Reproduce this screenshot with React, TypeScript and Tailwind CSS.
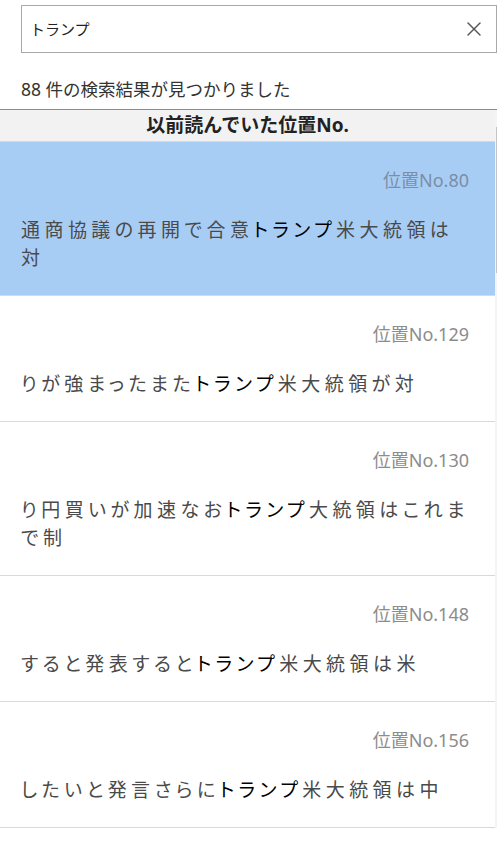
import { X } from "lucide-react"

const results = [
  { pos: 80, before: "通商協議の再開で合意", hit: "トランプ", after: "米大統領は対", active: true },
  { pos: 129, before: "りが強まったまた", hit: "トランプ", after: "米大統領が対" },
  { pos: 130, before: "り円買いが加速なお", hit: "トランプ", after: "大統領はこれまで制" },
  { pos: 148, before: "すると発表すると", hit: "トランプ", after: "米大統領は米" },
  { pos: 156, before: "したいと発言さらに", hit: "トランプ", after: "米大統領は中" },
]

const font = { fontFamily: '"Noto Sans", "Noto Sans CJK JP", sans-serif' }

function ResultRow({ item }: { item: (typeof results)[number] }) {
  return (
    <div
      className={
        "border-b border-[#d9d9d9] pt-[28px] pb-[23px] " +
        (item.active ? "bg-[#a8cdf5]" : "bg-white")
      }
    >
      <div
        className={
          "h-[20px] pr-[26px] text-right text-[18px] leading-[20px] " +
          (item.active ? "text-[#7b8ea6]" : "text-[#8c8c8c]")
        }
      >
        位置No.{item.pos}
      </div>
      <p className="mt-[26px] pl-[21px] pr-[23px] text-[19px] leading-[28px] tracking-[4.45px] text-[#4a4a4a] [font-feature-settings:'palt']">
        {item.before}
        <span className="text-black">{item.hit}</span>
        {item.after}
      </p>
    </div>
  )
}

export default function App() {
  return (
    <div className="h-[851px] w-[497px] overflow-hidden bg-white" style={font}>
      <div className="pt-[5px] pl-[21px]">
        <div className="flex h-[48px] items-center border border-[#a9a9a9] pl-[8px] pr-[10px]">
          <span className="flex-1 text-[15px] text-[#222]">トランプ</span>
          <X className="h-[24px] w-[24px] text-[#555]" strokeWidth={1.4} />
        </div>
      </div>

      <p className="mt-[24px] mb-[8px] pl-[21px] text-[17.5px] leading-[24px] text-[#333]">
        88 件の検索結果が見つかりました
      </p>

      <div className="flex border-t border-[#8c8c8c]">
        <div className="w-[495px]">
          <div className="h-[32px] border-b border-[#d9d9d9] bg-[#f2f2f2] text-center text-[19px] font-bold leading-[31px] text-[#222]">
            以前読んでいた位置No.
          </div>
          {results.map((r) => (
            <ResultRow key={r.pos} item={r} />
          ))}
        </div>
        <div className="flex w-[2px] flex-col bg-[#f4f4f4]">
          <div className="mt-[17px] ml-[1px] h-[146px] w-[1px] bg-[#c4c4c4]" />
        </div>
      </div>
    </div>
  )
}
